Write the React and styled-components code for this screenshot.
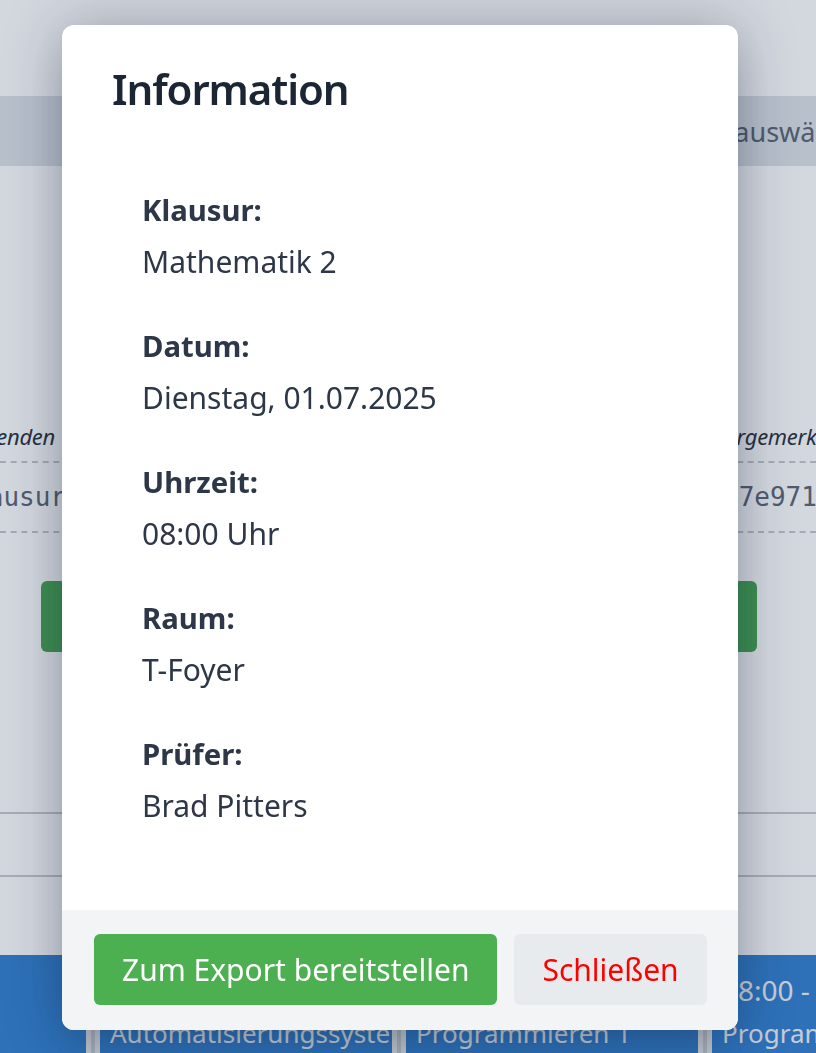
import React from "react";
import styled, { createGlobalStyle, css } from "styled-components";

const GlobalStyle = createGlobalStyle`
  *, *::before, *::after { box-sizing: border-box; }
  html, body { margin: 0; padding: 0; overflow: hidden; }
  body {
    font-family: "Noto Sans", "DejaVu Sans", sans-serif;
    background: #f4f8fd;
  }
`;

/* ---------- page behind the dialog ---------- */

const Page = styled.div`
  display: flex;
  flex-direction: column;
  height: 1053px;
  background: #f4f8fd;
`;

const TopBar = styled.header`
  height: 96px;
  flex-shrink: 0;
`;

const FilterBar = styled.div`
  height: 70px;
  flex-shrink: 0;
  background: #d4dce6;
  display: flex;
  align-items: center;
  padding-left: 631px;
  overflow: hidden;
  white-space: nowrap;
`;

const FilterLabel = styled.span`
  font-size: 27px;
  color: #5b677a;
`;

const DetailSection = styled.section`
  padding-top: 255px;
  flex-shrink: 0;
`;

const DetailGrid = styled.div`
  display: grid;
  grid-template-columns: 70px 1fr 110px;
  grid-template-rows: 30px 72px;
  row-gap: 10px;
`;

const sideAlign = css`
  justify-content: ${(p) => (p.$side === "end" ? "flex-end" : "flex-start")};
`;

const HeadCell = styled.div`
  display: flex;
  align-items: center;
  ${sideAlign};
  overflow: hidden;
  white-space: nowrap;
  font-size: 22px;
  font-style: italic;
  letter-spacing: -0.3px;
  color: #2c3645;
  padding: ${(p) => (p.$side === "end" ? "0 15px 0 0" : "0 0 0 7px")};
`;

const ValueCell = styled.div`
  display: flex;
  align-items: center;
  ${sideAlign};
  overflow: hidden;
  white-space: nowrap;
  border-top: 2px dashed #bdc4cd;
  border-bottom: 2px dashed #bdc4cd;
  font-family: "DejaVu Sans Mono", "Liberation Mono", monospace;
  font-size: 26px;
  color: #5b677a;
  padding: ${(p) => (p.$side === "end" ? "0 4px 0 0" : "0 0 0 17px")};
`;

const ActionRow = styled.div`
  margin-top: 48px;
  display: grid;
  grid-template-columns: 1fr 1fr;
  gap: 30px;
  padding: 0 59px 0 41px;
`;

const ActionButton = styled.button`
  height: 71px;
  border: none;
  border-radius: 6px;
  background: #48a45a;
  color: #fff;
  font-family: inherit;
  font-size: 28px;
`;

const List = styled.div`
  margin-top: 160px;
  flex-shrink: 0;
`;

const ListRow = styled.div`
  height: ${(p) => p.$h}px;
  border-top: 2px solid #c0c6cf;
`;

const Schedule = styled.div`
  flex: 1;
  background: #3481d0;
  display: grid;
  grid-template-columns: repeat(4, 306px);
  padding-left: 86px;
  overflow: hidden;
`;

const EventCell = styled.div`
  min-width: 0;
  padding: 15px 0 0 24px;
  box-shadow: inset 5px 0 0 #e0e5eb, inset 9px 0 0 #c3cad3, inset 14px 0 0 #e0e5eb;
  overflow: hidden;
  white-space: nowrap;
  color: #e6ebf1;
  font-size: 26px;
`;

const EventTime = styled.div`
  height: 40px;
  line-height: 40px;
  font-size: 28px;
`;

const EventTitle = styled.div`
  line-height: 40px;
  margin-top: 3px;
`;

/* ---------- dialog ---------- */

const Overlay = styled.div`
  position: fixed;
  inset: 0;
  background: rgba(15, 23, 42, 0.14);
  display: flex;
  align-items: flex-start;
  padding: 25px 78px 0 62px;
`;

const Modal = styled.div`
  width: 100%;
  background: #ffffff;
  border-radius: 12px;
  overflow: hidden;
  box-shadow: 0 0 60px rgba(15, 23, 42, 0.28), 0 20px 40px -10px rgba(15, 23, 42, 0.2);
`;

const ModalHeader = styled.div`
  padding: 36px 46px 0 50px;
`;

const Title = styled.h2`
  margin: 0;
  font-size: 42px;
  font-weight: 600;
  line-height: 56px;
  letter-spacing: -1.1px;
  color: #1b2534;
`;

const ModalBody = styled.div`
  padding: 72px 46px 83px 80px;
  display: flex;
  flex-direction: column;
  gap: 42px;
`;

const Field = styled.div`
  display: flex;
  flex-direction: column;
`;

const FieldLabel = styled.div`
  font-size: 29.3px;
  font-weight: 700;
  line-height: 42px;
  margin-bottom: 10px;
  color: #2d3748;
`;

const FieldValue = styled.div`
  font-size: 30px;
  line-height: 42px;
  color: #2d3748;
`;

const ModalFooter = styled.div`
  background: #f3f4f6;
  padding: 24px 32px 25px;
  display: flex;
  gap: 17px;
`;

const FooterButton = styled.button`
  height: 71px;
  border: none;
  border-radius: 6px;
  padding: 0 28px;
  font-family: inherit;
  font-size: 30px;
  white-space: nowrap;
  ${(p) =>
    p.$variant === "primary"
      ? css`
          flex: 1;
          background: #4caf50;
          color: #ffffff;
        `
      : css`
          background: #e8ebee;
          color: #ff0000;
        `}
`;

const fields = [
  ["Klausur:", "Mathematik 2"],
  ["Datum:", "Dienstag, 01.07.2025"],
  ["Uhrzeit:", "08:00 Uhr"],
  ["Raum:", "T-Foyer"],
  ["Prüfer:", "Brad Pitters"],
];

/* the times of the first two entries lie under the dialog and are not shown */
const events = [
  ["", "Automatisierungssysteme"],
  ["", "Programmieren 1"],
  ["08:00 - 09:30", "Programmieren 2"],
  ["", ""],
];

export default function App() {
  return (
    <>
      <GlobalStyle />
      <Page aria-hidden="true">
        <TopBar />
        <FilterBar>
          <FilterLabel>Klausur auswählen</FilterLabel>
        </FilterBar>
        <DetailSection>
          <DetailGrid>
            <HeadCell $side="end">Teilnehmenden</HeadCell>
            <HeadCell $side="start" />
            <HeadCell $side="start">Vorgemerkt</HeadCell>
            <ValueCell $side="end">Klausur</ValueCell>
            <ValueCell $side="start" />
            <ValueCell $side="start">a7e971f3</ValueCell>
          </DetailGrid>
          <ActionRow>
            <ActionButton aria-label="Anmelden" />
            <ActionButton aria-label="Vormerken" />
          </ActionRow>
        </DetailSection>
        <List>
          <ListRow $h={63} />
          <ListRow $h={80} />
        </List>
        <Schedule>
          {events.map(([time, title], i) => (
            <EventCell key={i}>
              <EventTime>{time}</EventTime>
              <EventTitle>{title}</EventTitle>
            </EventCell>
          ))}
        </Schedule>
      </Page>
      <Overlay>
        <Modal role="dialog" aria-modal="true">
          <ModalHeader>
            <Title>Information</Title>
          </ModalHeader>
          <ModalBody>
            {fields.map(([label, value]) => (
              <Field key={label}>
                <FieldLabel>{label}</FieldLabel>
                <FieldValue>{value}</FieldValue>
              </Field>
            ))}
          </ModalBody>
          <ModalFooter>
            <FooterButton $variant="primary">Zum Export bereitstellen</FooterButton>
            <FooterButton $variant="secondary">Schließen</FooterButton>
          </ModalFooter>
        </Modal>
      </Overlay>
    </>
  );
}
